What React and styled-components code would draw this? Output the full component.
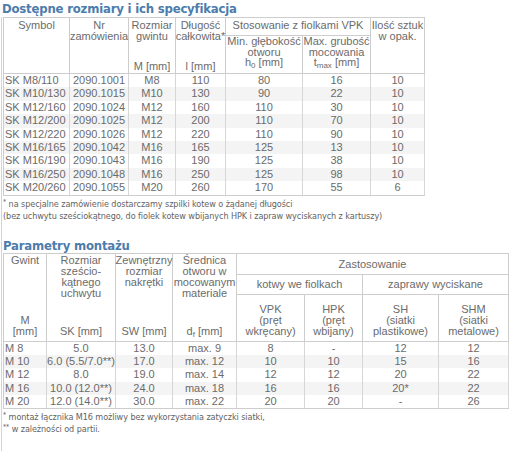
import React from 'react'
import styled, { createGlobalStyle } from 'styled-components'

const Global = createGlobalStyle`
  html, body { margin: 0; padding: 0; background: #fff; }
  body { width: 512px; height: 451px; overflow: hidden; }
`

const Page = styled.div`
  width: 512px;
  height: 451px;
  display: flex;
  flex-direction: column;
`

const Title = styled.h2`
  margin: 0;
  padding: 1px 0 0 2px;
  height: 16px;
  font-family: "DejaVu Sans Condensed", "DejaVu Sans", sans-serif;
  font-size: 13px;
  line-height: 16px;
  font-weight: bold;
  color: #4c7cab;
  letter-spacing: -0.2px;
  white-space: nowrap;
`

const Frame = styled.div`
  flex: 1;
  margin-left: 1px;
  padding-left: 1px;
  border-left: 1px solid #d4d4d4;
  display: flex;
  flex-direction: column;
`

const Grid = styled.div`
  display: grid;
  grid-template-columns: ${p => p.$cols};
  grid-template-rows: ${p => p.$rows};
  width: max-content;
  box-sizing: border-box;
  border-top: 1px solid #cdcdcd;
  border-left: 1px solid #cdcdcd;
  border-bottom: 1px solid #cdcdcd;
  font-family: "Liberation Sans", Arial, sans-serif;
  font-size: 11px;
  color: #6b6b6b;
`

const valigns = { top: 'flex-start', bottom: 'flex-end', middle: 'center', split: 'space-between' }

const Head = styled.div`
  grid-column: span ${p => p.$cols || 1};
  grid-row: span ${p => p.$rows || 1};
  display: flex;
  flex-direction: column;
  align-items: center;
  justify-content: ${p => valigns[p.$v || 'top']};
  box-sizing: border-box;
  padding: ${p => p.$pad || '2px 0 1px'};
  border-right: 1px solid #cdcdcd;
  border-bottom: 1px solid #cdcdcd;
  text-align: center;
  line-height: ${p => p.$lh || 11}px;
  white-space: nowrap;
`

const Cell = styled.div`
  box-sizing: border-box;
  border-right: 1px solid #d6d6d6;
  background: ${p => (p.$shade ? '#f4f4f4' : '#fff')};
  text-align: ${p => (p.$left ? 'left' : 'center')};
  padding-left: ${p => (p.$left ? '1px' : '0')};
  line-height: 13.4px;
  white-space: nowrap;
`

const Note = styled.div`
  font-family: "DejaVu Sans Condensed", "DejaVu Sans", sans-serif;
  font-size: 9px;
  line-height: 12px;
  letter-spacing: -0.07px;
  color: #636363;
  white-space: nowrap;
  padding-top: ${p => p.$top || 0}px;
`

const Star = styled.sup`
  font-size: 7px;
  line-height: 0;
  vertical-align: 3px;
`

const Heading2 = styled(Title)`
  padding: 0;
  margin: 16px 0 0;
  height: 15px;
`

const Sub = styled.sub`
  font-size: 8px;
  line-height: 0;
  vertical-align: -2px;
`

const sizes = [
  ['SK M8/110', '2090.1001', 'M8', '110', '80', '16', '10'],
  ['SK M10/130', '2090.1015', 'M10', '130', '90', '22', '10'],
  ['SK M12/160', '2090.1024', 'M12', '160', '110', '30', '10'],
  ['SK M12/200', '2090.1025', 'M12', '200', '110', '70', '10'],
  ['SK M12/220', '2090.1026', 'M12', '220', '110', '90', '10'],
  ['SK M16/165', '2090.1042', 'M16', '165', '125', '13', '10'],
  ['SK M16/190', '2090.1043', 'M16', '190', '125', '38', '10'],
  ['SK M16/250', '2090.1048', 'M16', '250', '125', '98', '10'],
  ['SK M20/260', '2090.1055', 'M20', '260', '170', '55', '6'],
]

const mounting = [
  ['M 8', '5.0', '13.0', 'max. 9', '8', '-', '12', '12'],
  ['M 10', '6.0 (5.5/7.0**)', '17.0', 'max. 12', '10', '10', '15', '16'],
  ['M 12', '8.0', '19.0', 'max. 14', '12', '12', '20', '22'],
  ['M 16', '10.0 (12.0**)', '24.0', 'max. 18', '16', '16', '20*', '22'],
  ['M 20', '12.0 (14.0**)', '30.0', 'max. 22', '20', '20', '-', '26'],
]

const BodyRows = ({ rows }) =>
  rows.map((row, r) =>
    row.map((v, c) => (
      <Cell key={r + '-' + c} $left={c === 0} $shade={r % 2 === 1}>{v}</Cell>
    ))
  )

export default function App() {
  return (
    <Page>
      <Global />
      <Title>Dostępne rozmiary i ich specyfikacja</Title>
      <Frame>
        <Grid $cols="66px 59px 47px 50px 77px 68px 54px" $rows="18px 38px repeat(9, 13.4px)">
          <Head $rows={2} $v="split"><span>Symbol</span></Head>
          <Head $rows={2} $v="split"><span>Nr<br />zamówienia</span></Head>
          <Head $rows={2} $v="split"><span>Rozmiar<br />gwintu</span><span>M [mm]</span></Head>
          <Head $rows={2} $v="split"><span>Długość<br />całkowita*</span><span>l [mm]</span></Head>
          <Head $cols={2}><span>Stosowanie z fiolkami VPK</span></Head>
          <Head $rows={2}><span>Ilość sztuk<br />w opak.</span></Head>
          <Head $pad="0 0 1px" $lh={10.7}><span>Min. głębokość<br />otworu<br />h<Sub>0</Sub> [mm]</span></Head>
          <Head $pad="0 0 1px" $lh={10.7}><span>Max. grubość<br />mocowania<br />t<Sub>max</Sub> [mm]</span></Head>
          <BodyRows rows={sizes} />
        </Grid>
        <Note $top={2}><Star>*</Star> na specjalne zamówienie dostarczamy szpilki kotew o żądanej długości</Note>
        <Note>(bez uchwytu sześciokątnego, do fiolek kotew wbijanych HPK i zapraw wyciskanych z kartuszy)</Note>
        <Heading2>Parametry montażu</Heading2>
        <Grid $cols="43px 69px 57px 64px 68px 58px 76px 70px" $rows="21px 20px 47px repeat(5, 13.4px)">
          <Head $rows={3} $v="split" $pad="1px 0 4px"><span>Gwint</span><span>M<br />[mm]</span></Head>
          <Head $rows={3} $v="split" $pad="1px 0 4px"><span>Rozmiar<br />sześcio-<br />kątnego<br />uchwytu</span><span>SK [mm]</span></Head>
          <Head $rows={3} $v="split" $pad="1px 0 4px"><span>Zewnętrzny<br />rozmiar<br />nakrętki</span><span>SW [mm]</span></Head>
          <Head $rows={3} $v="split" $pad="1px 0 4px"><span>Średnica<br />otworu w<br />mocowanym<br />materiale</span><span>d<Sub>f</Sub> [mm]</span></Head>
          <Head $cols={4} $v="middle"><span>Zastosowanie</span></Head>
          <Head $cols={2} $v="middle"><span>kotwy we fiolkach</span></Head>
          <Head $cols={2} $v="middle"><span>zaprawy wyciskane</span></Head>
          <Head $v="bottom" $pad="1px 0 4px"><span>VPK<br />(pręt<br />wkręcany)</span></Head>
          <Head $v="bottom" $pad="1px 0 4px"><span>HPK<br />(pręt<br />wbijany)</span></Head>
          <Head $v="bottom" $pad="1px 0 4px"><span>SH<br />(siatki<br />plastikowe)</span></Head>
          <Head $v="bottom" $pad="1px 0 4px"><span>SHM<br />(siatki<br />metalowe)</span></Head>
          <BodyRows rows={mounting} />
        </Grid>
        <Note $top={2}><Star>*</Star> montaż łącznika M16 możliwy bez wykorzystania zatyczki siatki,</Note>
        <Note><Star>**</Star> w zależności od partii.</Note>
      </Frame>
    </Page>
  )
}
